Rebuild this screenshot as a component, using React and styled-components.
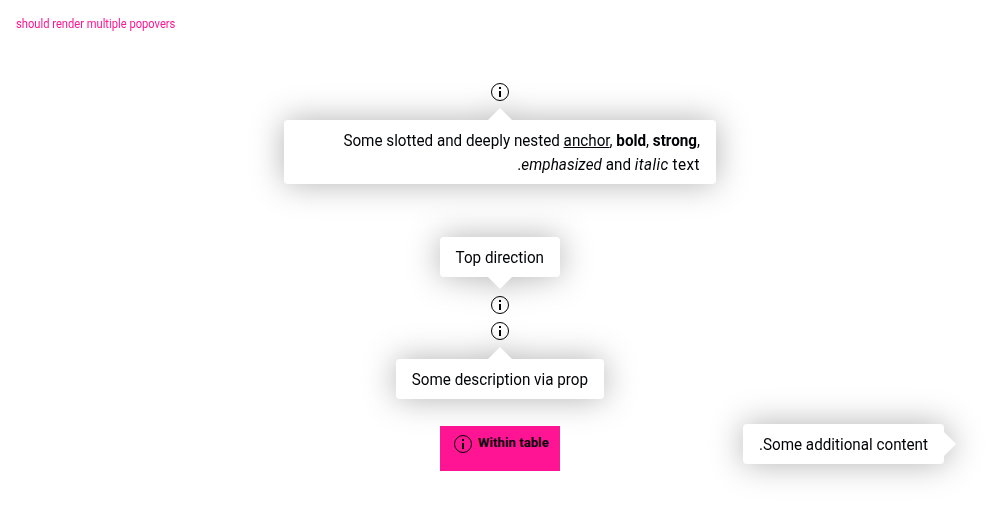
import React from 'react';
import styled, { createGlobalStyle, css } from 'styled-components';

const GlobalStyle = createGlobalStyle`
  * { box-sizing: border-box; }
  body {
    margin: 0;
    background: #fff;
    color: #010205;
    font-family: Roboto, "Liberation Sans", sans-serif;
    font-size: 16px;
    line-height: 24px;
    overflow: hidden;
  }
`;

const Page = styled.main`
  height: 532px;
  padding: 16px;
  display: flex;
  flex-direction: column;
`;

const Title = styled.h1`
  align-self: flex-start;
  margin: 0 0 64px;
  font-size: 12px;
  font-weight: 400;
  line-height: 16px;
  color: #ff1493;
  transform: scaleX(0.93);
  transform-origin: left;
`;

const Examples = styled.div`
  direction: rtl;
  display: flex;
  flex-direction: column;
  align-items: center;
`;

const Anchor = styled.div`
  position: relative;
  display: flex;
  width: 24px;
  height: 24px;
  margin-top: ${(p) => p.$gap || 0}px;
`;

const Icon = styled.svg`
  display: block;
  flex: none;
  width: 24px;
  height: 24px;
`;

const directions = {
  bottom: css`
    top: 40px;
    left: 50%;
    transform: translateX(-50%);
    &::before {
      left: calc(50% - 12px);
      bottom: 100%;
      width: 24px;
      height: 12px;
      clip-path: polygon(50% 0, 100% 100%, 0 100%);
    }
  `,
  top: css`
    bottom: 40px;
    left: 50%;
    transform: translateX(-50%);
    &::before {
      left: calc(50% - 12px);
      top: 100%;
      width: 24px;
      height: 12px;
      clip-path: polygon(0 0, 100% 0, 50% 100%);
    }
  `,
  left: css`
    top: -8px;
    right: 40px;
    &::before {
      left: 100%;
      top: calc(50% - 12px);
      width: 12px;
      height: 24px;
      clip-path: polygon(0 0, 100% 50%, 0 100%);
    }
  `,
};

const Bubble = styled.div`
  position: absolute;
  width: ${(p) => p.$width}px;
  padding: 9px 16px 7px;
  border-radius: 4px;
  background: #fff;
  filter: drop-shadow(0 0 16px rgba(0, 0, 0, 0.3));
  white-space: ${(p) => (p.$wrap ? 'normal' : 'nowrap')};
  &::before {
    content: '';
    position: absolute;
    background: #fff;
  }
  ${(p) => directions[p.$direction]}
`;

/* Condenses the text towards its right-to-left start edge. */
const Copy = styled.div`
  transform: scaleX(0.951);
  transform-origin: right;
`;

const Link = styled.a`
  color: inherit;
  text-decoration: underline;
`;

const Emphasis = styled.em`
  letter-spacing: 0.1px;
`;

const Italic = styled.i`
  letter-spacing: 0.45px;
`;

const Spaced = styled.span`
  letter-spacing: 0.5px;
`;

const TableRow = styled.div`
  position: relative;
  z-index: 1;
  align-self: stretch;
  display: flex;
  justify-content: center;
  margin-top: 83px;
`;

const Cell = styled.div`
  direction: ltr;
  display: flex;
  align-items: flex-start;
  gap: 3px;
  width: 120px;
  height: 45px;
  padding: 6px 11px;
  background: #ff1493;
`;

const CellLabel = styled.span`
  font-size: 13px;
  font-weight: 700;
  line-height: 22px;
  letter-spacing: 0.1px;
  white-space: nowrap;
`;

const EdgeAnchor = styled.div`
  position: absolute;
  right: 0;
  top: 6px;
  width: 24px;
  height: 24px;
`;

function InfoIcon() {
  return (
    <Icon viewBox="0 0 24 24" aria-hidden="true">
      <circle cx="12" cy="12" r="8.5" fill="none" stroke="#010205" strokeWidth="1" />
      <path d="M11 7h2v2h-2zM11 11h2v6h-2z" fill="#010205" />
    </Icon>
  );
}

function Popover({ gap, children, ...bubble }) {
  return (
    <Anchor $gap={gap}>
      <Bubble {...bubble}>
        <Copy>{children}</Copy>
      </Bubble>
      <InfoIcon />
    </Anchor>
  );
}

export default function App() {
  return (
    <>
      <GlobalStyle />
      <Page>
        <Title>should render multiple popovers</Title>
        <Examples>
          <Popover gap={-16} $direction="bottom" $width={432} $wrap>
            Some slotted and deeply nested <Link>anchor</Link>, <b>bold</b>, <strong>strong</strong>,{' '}
            <Emphasis>emphasized</Emphasis> and <Italic>italic</Italic> <Spaced>text</Spaced>.
          </Popover>
          <Popover gap={189} $direction="top" $width={120}>
            Top direction
          </Popover>
          <Popover gap={2} $direction="bottom" $width={208}>
            Some description via prop
          </Popover>
          <TableRow>
            <Cell>
              <InfoIcon />
              <CellLabel>Within table</CellLabel>
            </Cell>
            <EdgeAnchor>
              <Bubble $direction="left" $width={201}>
                <Copy>Some additional content.</Copy>
              </Bubble>
            </EdgeAnchor>
          </TableRow>
        </Examples>
      </Page>
    </>
  );
}
